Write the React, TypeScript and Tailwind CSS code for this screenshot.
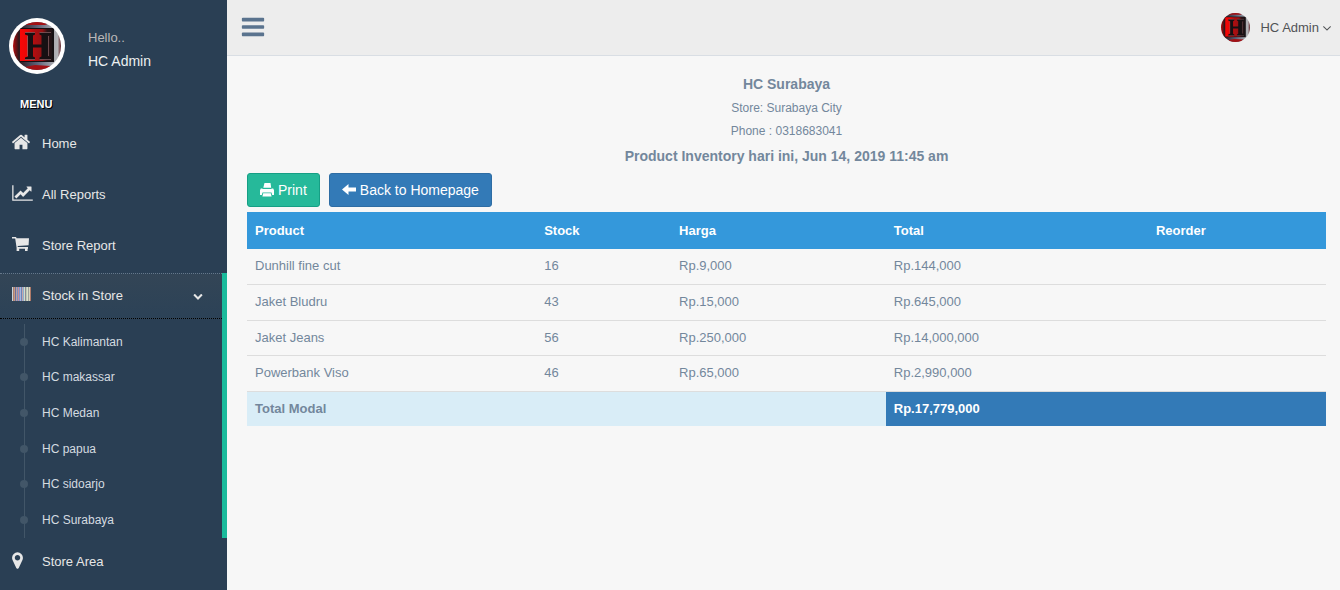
import React from "react";

type GlyphProps = { viewBox: string; d: string; className: string };

function Glyph({ viewBox, d, className }: GlyphProps) {
  return (
    <svg viewBox={viewBox} className={className} fill="currentColor" aria-hidden="true">
      <path d={d} />
    </svg>
  );
}

const HOME =
  "M1472 992v480q0 26-19 45t-45 19h-384v-384h-256v384h-384q-26 0-45-19t-19-45v-480q0-1 .5-3t.5-3l575-474 575 474q1 2 1 6zm223-69l-62 74q-8 9-21 11h-3q-13 0-21-7l-692-577-692 577q-12 8-24 7-13-2-21-11l-62-74q-8-10-7-23.5t11-21.5l719-599q32-26 76-26t76 26l244 204v-195q0-14 9-23t23-9h192q14 0 23 9t9 23v408l219 182q10 8 11 21.5t-7 23.5z";
const CHART =
  "M2048 1536v128h-2048v-1536h128v1408h1920zm-128-1248v435q0 21-19.5 29.5t-35.5-7.5l-121-121-633 633q-10 10-23 10t-23-10l-233-233-416 416-192-192 585-585q10-10 23-10t23 10l233 233 464-464-121-121q-16-16-7.5-35.5t29.5-19.5h435q14 0 23 9t9 23z";
const CART =
  "M0 0h4l.6 1.200H17l-.4 7-11 .800.3 1H16v1.700h-.400V14H13v-2.200H7.200V14H4.600v-3.300L3.200 1.400H0z";
const MARKER =
  "M1152 640q0-106-75-181t-181-75-181 75-75 181 75 181 181 75 181-75 75-181zm256 0q0 109-33 179l-364 774q-16 33-47.5 52t-67.5 19-67.5-19-46.5-52l-365-774q-33-70-33-179 0-212 150-362t362-150 362 150 150 362z";
const CHEVRON =
  "M1683 808l-742 741q-19 19-45 19t-45-19l-742-741q-19-19-19-45.5t19-45.5l166-165q19-19 45-19t45 19l531 531 531-531q19-19 45-19t45 19l166 165q19 19 19 45.5t-19 45.5z";
const ANGLE =
  "M1395 736q0 13-10 23l-466 466q-10 10-23 10t-23-10l-466-466q-10-10-10-23t10-23l50-50q10-10 23-10t23 10l393 393 393-393q10-10 23-10t23 10l50 50q10 10 10 23z";
const BARS =
  "M1664 1344v128q0 26-19 45t-45 19h-1408q-26 0-45-19t-19-45v-128q0-26 19-45t45-19h1408q26 0 45 19t19 45zm0-512v128q0 26-19 45t-45 19h-1408q-26 0-45-19t-19-45v-128q0-26 19-45t45-19h1408q26 0 45 19t19 45zm0-512v128q0 26-19 45t-45 19h-1408q-26 0-45-19t-19-45v-128q0-26 19-45t45-19h1408q26 0 45 19t19 45z";
const PRINTER =
  "M4.500 0h6l.7 4.800H3.300zM.8 5.500h1.700V6h9V5.500h1.700l.8 1.800V12h-1.800l-.7-2.500H2.500L1.800 12H0V7.300zM3.200 10.300h7.600l.8 3.200H2.400z";
const ARROW = "M0 6.500L6.500 1v3.500H14v4H6.500V12z";

const BARCODE = [
  "#c9d4dc", "#a8806f", "#c49a84", "#6d6f9c", "#b9a3a0", "#7d8fc0", "#c58f94",
  "#8393c9", "#a9b5dd", "#6d86b8", "#c4a5aa", "#8bb0cf", "#d6dcc8", "#8f8a98",
  "#b9cdb4", "#e0dccb", "#9aa39a", "#d9d3bd", "#b07a68",
];

function Emblem({ className }: { className: string }) {
  return (
    <svg viewBox="0 0 48 48" className={className} role="img" aria-label="HC Admin">
      <defs>
        <linearGradient id="face" x1="0" x2="1">
          <stop offset="0" stopColor="#f80606" />
          <stop offset="0.25" stopColor="#e80808" />
          <stop offset="0.45" stopColor="#b00e10" />
          <stop offset="0.7" stopColor="#951114" />
          <stop offset="0.85" stopColor="#2c1316" />
          <stop offset="1" stopColor="#1f1316" />
        </linearGradient>
        <linearGradient id="ring" x1="0" x2="1">
          <stop offset="0" stopColor="#b80c0e" />
          <stop offset="0.12" stopColor="#30181c" />
          <stop offset="0.5" stopColor="#5b6178" />
          <stop offset="0.85" stopColor="#a9aab0" />
          <stop offset="0.93" stopColor="#b4b4b8" />
          <stop offset="1" stopColor="#5d1a20" />
        </linearGradient>
        <clipPath id="disc">
          <circle cx="24" cy="24" r="24" />
        </clipPath>
      </defs>
      <g clipPath="url(#disc)">
        <rect width="48" height="48" fill="url(#ring)" />
        <path d="M8 0h32l-8 3H12zM12 45l10-2 16 1-4 4H14z" fill="#a31115" />
        <rect x="7" y="6" width="34" height="34" fill="#151013" />
        <rect x="7" y="7" width="32" height="32" fill="url(#face)" />
        <path
          d="M12 10.500h10v2l-2 1v9h8.500v-9l-2-1v-2H38v2l-3 1v21l3 1v2H26.500v-2l2-1v-9H20v9l2 1v2H12v-2l3-1v-21l-3-1z"
          fill="#171013"
        />
        <path d="M12 10.500h10M26.500 10.500H38M14.500 14v20M12 37.500h10M26.500 37.500H38M35.500 14v20" fill="none" stroke="#8b6468" strokeWidth="0.7" />
      </g>
    </svg>
  );
}

function MenuLink({ label, children }: { label: string; children: React.ReactNode }) {
  return (
    <a href="#" className="flex h-[51px] items-start pt-[14px] pl-3 text-[#e7e7e7]">
      <span className="flex h-4 w-[30px] shrink-0 items-center">{children}</span>
      <span className="leading-5">{label}</span>
    </a>
  );
}

const stores = ["HC Kalimantan", "HC makassar", "HC Medan", "HC papua", "HC sidoarjo", "HC Surabaya"];

const products = [
  ["Dunhill fine cut", "16", "Rp.9,000", "Rp.144,000"],
  ["Jaket Bludru", "43", "Rp.15,000", "Rp.645,000"],
  ["Jaket Jeans", "56", "Rp.250,000", "Rp.14,000,000"],
  ["Powerbank Viso", "46", "Rp.65,000", "Rp.2,990,000"],
];

function Sidebar() {
  return (
    <aside className="w-[227px] shrink-0 bg-[#2a3f54]">
      <div className="flex pt-[18px] pl-[9px]">
        <div className="size-14 shrink-0 rounded-full bg-white p-1">
          <Emblem className="size-12" />
        </div>
        <div className="pt-[10px] pl-[23px]">
          <p className="leading-5 text-[#bab8b8]">Hello..</p>
          <h2 className="pt-[3px] text-sm leading-5 text-[#ecf0f1]">HC Admin</h2>
        </div>
      </div>
      <h3 className="pt-5 pl-5 text-[11px] leading-5 font-bold text-white [text-shadow:1px_1px_#000]">MENU</h3>
      <nav aria-label="Menu" className="pt-[6px]">
        <MenuLink label="Home">
          <Glyph viewBox="90 0 1612 1792" d={HOME} className="h-5 w-[18px]" />
        </MenuLink>
        <MenuLink label="All Reports">
          <Glyph viewBox="0 0 2048 1792" d={CHART} className="h-[18px] w-[21px]" />
        </MenuLink>
        <MenuLink label="Store Report">
          <Glyph viewBox="0 0 17 14" d={CART} className="h-[14px] w-[17px]" />
        </MenuLink>
        <div className="border-r-[5px] border-[#1abb9c]">
          <a
            href="#"
            aria-expanded="true"
            className="flex h-[46px] items-center border-t border-b border-dotted border-t-[#66788a] border-b-black bg-linear-to-b from-[#334556] to-[#2c4257] pl-3 text-[#e7e7e7]"
          >
            <span className="w-[30px] shrink-0">
              <svg viewBox="0 0 19 14" className="mb-1 h-[14px] w-[19px]" aria-hidden="true">
                {BARCODE.map((fill, i) => (
                  <rect key={i} x={i} width="1" height="14" fill={fill} />
                ))}
              </svg>
            </span>
            <span className="grow">Stock in Store</span>
            <Glyph viewBox="0 0 1792 1792" d={CHEVRON} className="mr-[19px] size-[10px]" />
          </a>
          <ul className="mt-[5px] ml-6 grid h-[214px] auto-rows-fr border-l border-[#425668] text-xs">
            {stores.map((store) => (
              <li key={store} className="flex items-center">
                <span className="-ml-[5px] size-2 rounded-full bg-[#425668]" />
                <a href="#" className="pl-[14px] text-[#d5dbe0]">
                  {store}
                </a>
              </li>
            ))}
          </ul>
        </div>
        <MenuLink label="Store Area">
          <Glyph viewBox="384 0 1024 1792" d={MARKER} className="h-[19px] w-[11px]" />
        </MenuLink>
      </nav>
    </aside>
  );
}

function Header() {
  return (
    <header className="flex h-14 items-center justify-between border-b border-[#d9dee4] bg-[#ededed] pr-[9px] pl-[13px]">
      <button type="button" aria-label="Toggle menu" className="pb-[2px] text-[#5a738e]">
        <Glyph viewBox="0 0 1792 1792" d={BARS} className="size-[26px]" />
      </button>
      <button type="button" className="flex items-center text-[#515356]">
        <Emblem className="mr-[10px] size-[29px]" />
        <span>HC Admin</span>
        <Glyph viewBox="384 384 1024 1024" d={ANGLE} className="ml-1 size-2" />
      </button>
    </header>
  );
}

export default function App() {
  return (
    <div className="flex min-h-screen bg-[#f7f7f7] font-['Liberation_Sans',Arial,sans-serif] text-[13px] leading-5 text-[#73879c]">
      <Sidebar />
      <div className="min-w-0 grow">
        <Header />
        <main className="pt-[18px] pr-[14px] pl-5">
          <div className="text-center">
            <h1 className="text-sm leading-5 font-bold">HC Surabaya</h1>
            <p className="pt-1 text-xs leading-5">Store: Surabaya City</p>
            <p className="pt-[3px] text-xs leading-5">Phone : 0318683041</p>
            <h2 className="pt-[5px] text-sm leading-5 font-bold">Product Inventory hari ini, Jun 14, 2019 11:45 am</h2>
          </div>
          <div className="flex gap-[9px] pt-[7px] pb-[5px] text-sm leading-5 text-white">
            <button type="button" className="flex h-[34px] items-center gap-1 rounded-[3px] border border-[#169f85] bg-[#26b99a] px-3">
              <Glyph viewBox="0 0 14 14" d={PRINTER} className="size-[14px]" />
              Print
            </button>
            <a href="#" className="flex h-[34px] items-center gap-1 rounded-[3px] border border-[#2e6da4] bg-[#337ab7] px-3">
              <Glyph viewBox="0 0 14 14" d={ARROW} className="size-[14px]" />
              Back to Homepage
            </a>
          </div>
          <table className="w-full table-fixed border-collapse text-left">
            <colgroup>
              <col className="w-[26.8%]" />
              <col className="w-[12.5%]" />
              <col className="w-[19.9%]" />
              <col className="w-[24.3%]" />
              <col />
            </colgroup>
            <thead>
              <tr className="h-[37px] bg-[#3498db] text-white">
                {["Product", "Stock", "Harga", "Total", "Reorder"].map((name) => (
                  <th key={name} scope="col" className="px-2 font-bold">
                    {name}
                  </th>
                ))}
              </tr>
            </thead>
            <tbody>
              {products.map((row) => (
                <tr key={row[0]} className="border-b border-[#ddd] odd:h-[35px] even:h-[36px]">
                  {row.map((cell, i) => (
                    <td key={i} className="px-2">
                      {cell}
                    </td>
                  ))}
                  <td />
                </tr>
              ))}
              <tr className="h-[35px] font-bold">
                <td colSpan={3} className="bg-[#d9edf7] px-2">
                  Total Modal
                </td>
                <td colSpan={2} className="bg-[#337ab7] px-2 text-white">
                  Rp.17,779,000
                </td>
              </tr>
            </tbody>
          </table>
        </main>
      </div>
    </div>
  );
}
